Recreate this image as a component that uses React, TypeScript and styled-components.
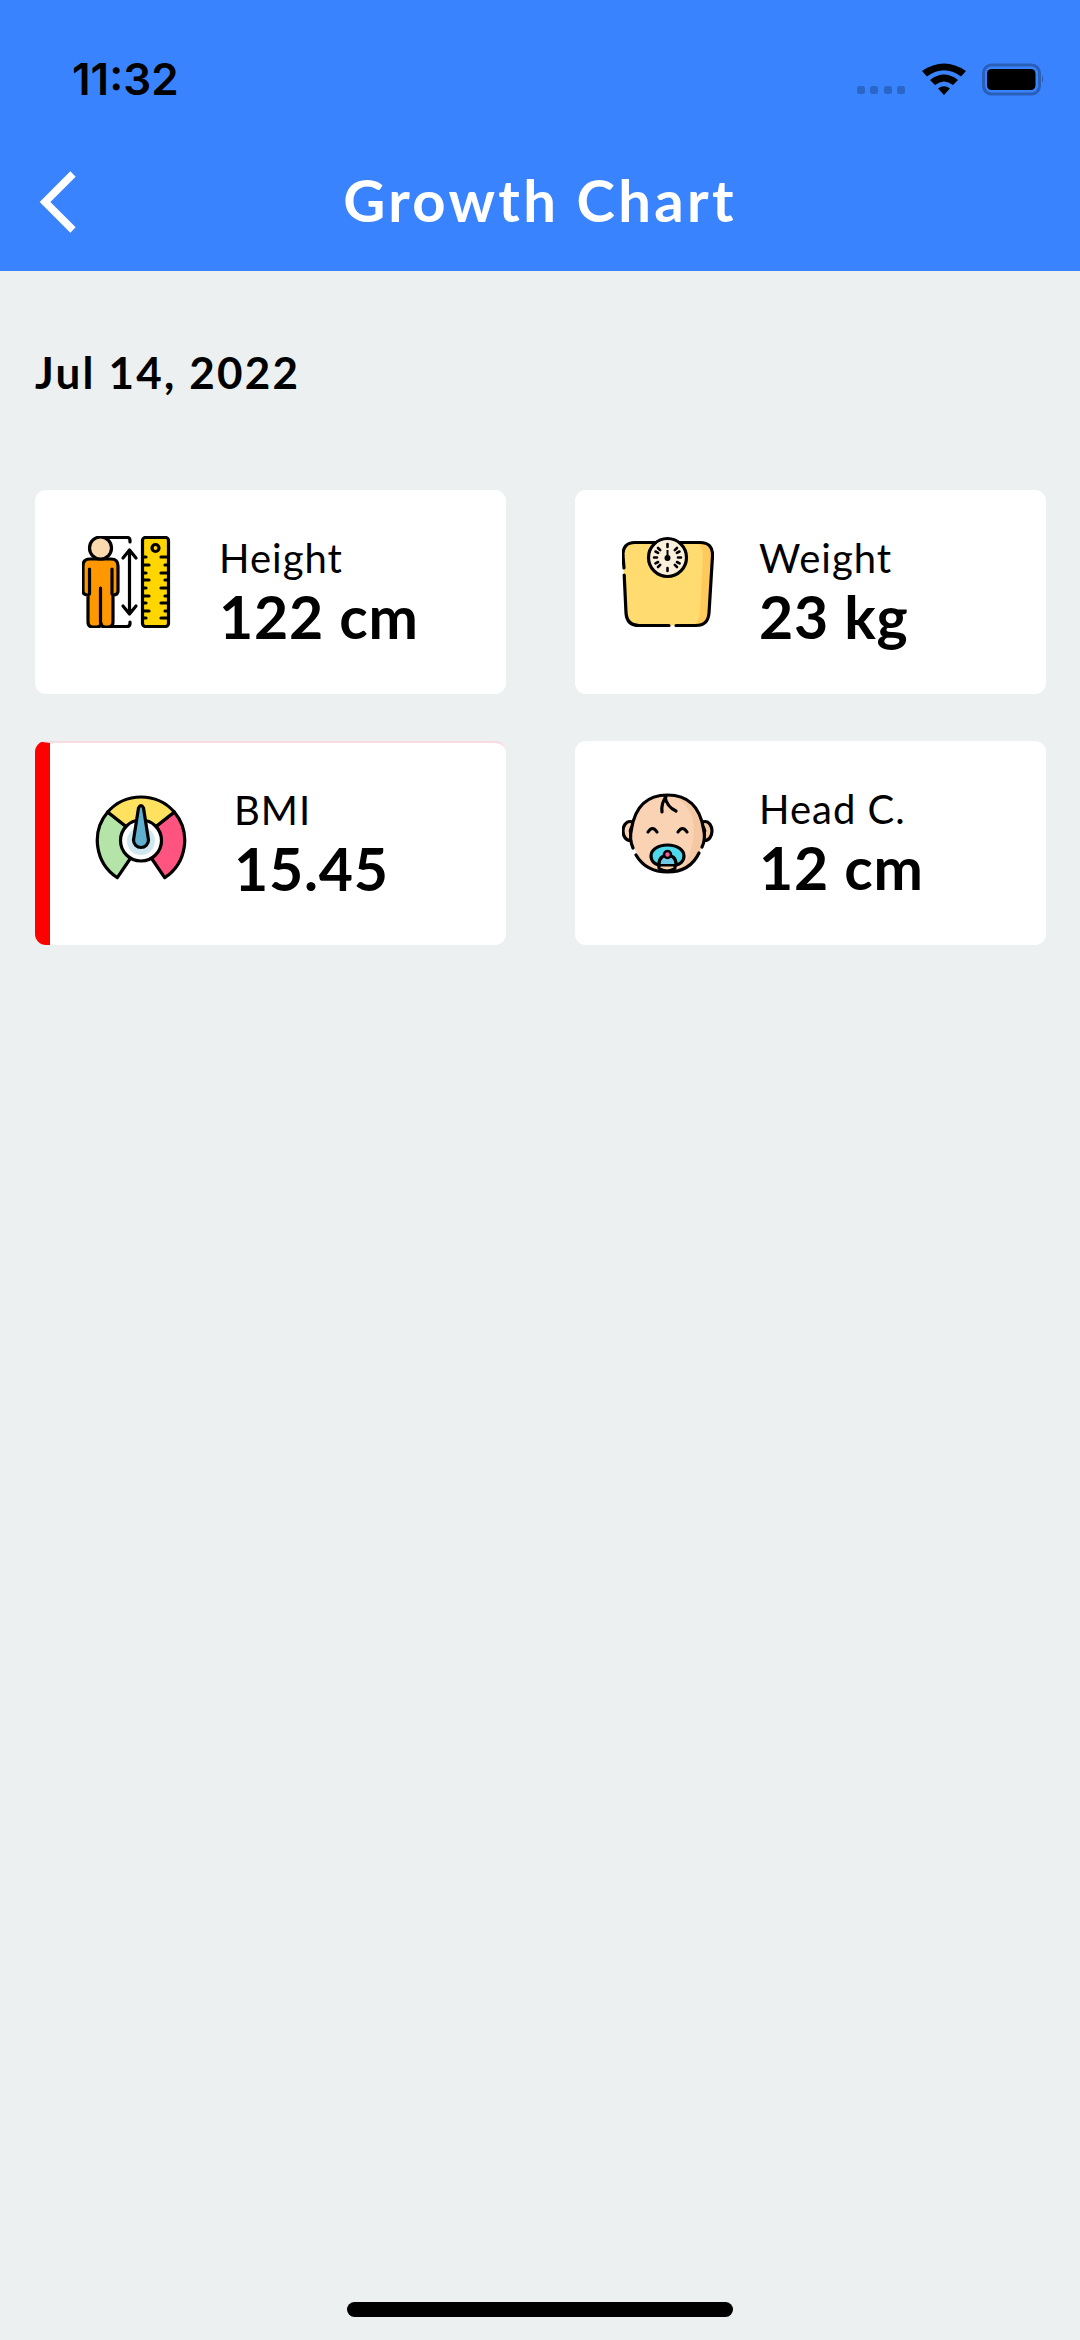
import React from "react";
import styled, { createGlobalStyle } from "styled-components";

const Global = createGlobalStyle`
  html, body { margin: 0; padding: 0; background: #ecf0f1; }
  * { box-sizing: border-box; }
`;

const Page = styled.div`
  width: 1080px;
  height: 2340px;
  display: flex;
  flex-direction: column;
  background: #ecf0f1;
  font-family: "Lato", "Liberation Sans", sans-serif;
  color: #000;
  overflow: hidden;
`;

const Header = styled.header`
  height: 271px;
  background: #3a83ff;
  display: flex;
  flex-direction: column;
`;

const StatusBar = styled.div`
  height: 158px;
  padding: 56px 36px 0 72px;
  display: flex;
  justify-content: space-between;
  align-items: flex-start;
`;

const Time = styled.div`
  font-family: "Inter", "Liberation Sans", sans-serif;
  font-size: 44px;
  line-height: 46px;
  font-weight: 600;
  letter-spacing: 0;
`;

const StatusIcons = styled.svg`
  display: block;
  margin-top: 7px;
`;

const NavBar = styled.nav`
  position: relative;
  height: 84px;
  display: flex;
  align-items: center;
  justify-content: center;
`;

const BackIcon = styled.svg`
  position: absolute;
  left: 38px;
  top: 13px;
`;

const Title = styled.h1`
  margin: 0;
  font-size: 58px;
  line-height: 84px;
  font-weight: 700;
  color: #fff;
  letter-spacing: 3.3px;
`;

const Content = styled.main`
  flex: 1;
  padding: 0 35px;
  display: flex;
  flex-direction: column;
`;

const DateLabel = styled.div`
  margin-top: 73px;
  font-size: 44px;
  line-height: 56px;
  font-weight: 700;
  letter-spacing: 2.2px;
`;

const Grid = styled.div`
  margin-top: 90px;
  display: grid;
  grid-template-columns: 471px 471px;
  column-gap: 69px;
  row-gap: 47px;
`;

const Card = styled.section<{ $alert?: boolean }>`
  height: 204px;
  background: #fff;
  border-radius: 11px;
  display: flex;
  align-items: flex-start;
  padding: ${(p) => (p.$alert ? "45px 0 0 45px" : "46px 0 0 47px")};
  border-top: ${(p) => (p.$alert ? "2px solid #f8dcdf" : "none")};
  border-left: ${(p) => (p.$alert ? "15px solid #ff0000" : "none")};
`;

const IconBox = styled.svg`
  display: block;
  flex: none;
  width: 92px;
  height: 92px;
`;

const CardText = styled.div<{ $alert?: boolean }>`
  margin-left: ${(p) => (p.$alert ? "47px" : "45px")};
  margin-top: -2px;
  display: flex;
  flex-direction: column;
`;

const Label = styled.div`
  font-size: 40px;
  line-height: 48px;
  font-weight: 400;
  letter-spacing: 1px;
`;

const Value = styled.div`
  font-size: 59px;
  line-height: 69px;
  font-weight: 700;
  letter-spacing: 0.8px;
`;

const HomeBar = styled.div`
  width: 386px;
  height: 15px;
  border-radius: 8px;
  background: #000;
  margin: 0 auto 23px;
`;

const S = { stroke: "#000", strokeWidth: 3.2, strokeLinecap: "round", strokeLinejoin: "round" } as const;

const HeightIcon = () => (
  <IconBox viewBox="0 0 92 92">
    <path d="M18 1.500H45q3 0 3 3V6M30 90.500H45q3 0 3-3V86" fill="none" {...S} />
    <path d="M47.500 14V78M41 22l6.500-8 6.500 8M41 70l6.500 8 6.500-8" fill="none" {...S} />
    <path d="M8 23h21q7 0 7 7v25q0 4-5 4v27q0 5-5 5h-3q-4 0-4-4q0 4-4 4h-4q-5 0-5-5V59q-5 0-5-4V30q0-7 7-7z" fill="#ff9800" {...S} />
    <path d="M7.500 33V58M30 33V58M18.500 52V86" fill="none" {...S} />
    <circle cx="18.500" cy="12" r="11" fill="#fbd9ae" {...S} />
    <rect x="60.500" y="1.500" width="26" height="89" rx="3" fill="#ffd600" {...S} />
    <circle cx="73.500" cy="12" r="3.500" fill="#ffd600" {...S} />
    <path d="M79 21h7M61 29h6M79 37h7M61 44h6M79 52h7M61 60h6M79 67h7M61 75h6M79 82h7M61 21h3M83 29h3M61 37h3M83 44h3M61 52h3M83 60h3M61 67h3M83 75h3M61 82h3" fill="none" {...S} />
  </IconBox>
);

const WeightIcon = () => (
  <IconBox viewBox="0 0 92 92">
    <path d="M13 6.500H78Q91 6.500 90.500 20L87 77Q86 89.500 74 89.500H17Q5 89.500 4 77L1 20Q0.500 6.500 13 6.500z" fill="#ffdb70" />
    <path d="M70 6.500H78Q91 6.500 90.500 20L87 77Q86 89.500 74 89.500H66Q77 89.500 78 77L81 20Q81 6.500 70 6.500z" fill="#ffc95c" />
    <path d="M2 32L1 20Q0.500 6.500 13 6.500H78Q91 6.500 90.500 20L87 77Q86 89.500 74 89.500H54M47 89.500H17Q5 89.500 4 77L2.200 39" fill="none" {...S} />
    <circle cx="45.500" cy="21.500" r="19" fill="#fbf0dc" {...S} />
    <path d="M45.500 8v3M45.500 32v3M32 21.500h3M56 21.500h3M36 12l2.200 2.200M52.800 28.800L55 31M55 12l-2.200 2.200M38.200 28.800L36 31M33.500 15.500l2.600 1.300M55 26l2.600 1.300M57.500 15.500l-2.600 1.300M36.100 26l-2.600 1.300" fill="none" stroke="#000" strokeWidth="2.600" strokeLinecap="round" />
    <circle cx="45.500" cy="22" r="3" fill="#000" />
    <path d="M45.500 14v8" stroke="#000" strokeWidth="2" />
  </IconBox>
);

const BmiIcon = () => (
  <IconBox viewBox="0 0 92 92">
    <path d="M12.700 24A44.500 44.500 0 0 0 22.300 89.700L35.700 70A21 21 0 0 1 31.700 39z" fill="#b5e4a8" {...S} />
    <path d="M79.300 24A44.500 44.500 0 0 1 69.700 89.700L56.300 70A21 21 0 0 0 60.300 39z" fill="#ff5480" {...S} />
    <path d="M12.700 24A44.500 44.500 0 0 1 79.300 24L60.300 39A21 21 0 0 0 31.700 39z" fill="#ffe160" {...S} />
    <circle cx="46" cy="52.500" r="20.500" fill="#fff" {...S} />
    <circle cx="46" cy="53" r="14" fill="#cfe8f0" />
    <path d="M43.500 20Q46 15 48.500 20L53.500 52A7.500 7.500 0 1 1 38.500 52z" fill="#5fb0d0" {...S} />
  </IconBox>
);

const HeadIcon = () => (
  <IconBox viewBox="0 0 92 92">
    <ellipse cx="8" cy="44" rx="7" ry="9.500" fill="#fad3b5" {...S} />
    <ellipse cx="83" cy="44" rx="7" ry="9.500" fill="#f5c8a4" {...S} />
    <path d="M11 50q-6-6 0-12M80 50q6-6 0-12" fill="none" stroke="#000" strokeWidth="2.500" strokeLinecap="round" />
    <ellipse cx="45.500" cy="46.500" rx="36" ry="38.500" fill="#fad3b5" />
    <path d="M52 9Q82 15 81.500 46.500Q81 72 60 82Q72 62 72 44Q72 20 52 9z" fill="#f5c8a4" />
    <path d="M11 61Q7 52 9.500 42Q15 8 45.500 8Q76 8 81.500 42Q84 52 80 60M14 68Q24 85 45.500 85Q68 85 77 66" fill="none" {...S} />
    <path d="M40 25q-1-9 4-15M43 10q2 10 11 14" fill="none" {...S} />
    <path d="M26 45q4.500-7 9 0M56 45q4.500-7 9 0" fill="none" {...S} />
    <path d="M37 76H53V81q-3 3-8 3t-8-3z" fill="#f7cfa8" {...S} />
    <path d="M45.500 58c10 0 16.500 5 16.500 11 0 5-4 9-9 9H38c-5 0-9-4-9-9 0-6 6.500-11 16.500-11z" fill="#4dd8ec" {...S} />
    <path d="M37 77C37 65 54 65 54 77" fill="#6fc9e0" {...S} />
    <circle cx="45.500" cy="67.500" r="3.500" fill="#f0609c" stroke="#000" strokeWidth="2.500" />
  </IconBox>
);

const cards = [
  { key: "h", label: "Height", value: "122 cm", icon: <HeightIcon /> },
  { key: "w", label: "Weight", value: "23 kg", icon: <WeightIcon /> },
  { key: "b", label: "BMI", value: "15.45", icon: <BmiIcon />, alert: true },
  { key: "c", label: "Head C.", value: "12 cm", icon: <HeadIcon /> },
];

export default function App() {
  return (
    <Page>
      <Global />
      <Header>
        <StatusBar>
          <Time>11:32</Time>
          <StatusIcons width="188" height="40" viewBox="0 0 188 40">
            <g fill="#2a66c8">
              <rect x="1" y="23" width="8" height="8" rx="2.500" />
              <rect x="14" y="23" width="8" height="8" rx="2.500" />
              <rect x="28" y="23" width="8" height="8" rx="2.500" />
              <rect x="41" y="23" width="8" height="8" rx="2.500" />
            </g>
            <path d="M66 8Q88-7 110 8L105 13.500Q88 1 71 13.500z" />
            <path d="M74 17Q88 6 102 17L97 22Q88 15 79 22z" />
            <path d="M82 25.500Q88 21 94 25.500L88 32z" />
            <rect x="127.500" y="2" width="56" height="29" rx="8" fill="none" stroke="#2a5fb8" strokeWidth="3" />
            <rect x="131" y="6" width="48.500" height="21" rx="4.500" />
            <path d="M186 12q2.500 4 0 8z" fill="#2a5fb8" />
          </StatusIcons>
        </StatusBar>
        <NavBar>
          <BackIcon width="40" height="62" viewBox="0 0 40 62">
            <path d="M35 3L7 31L35 59" fill="none" stroke="#fff" strokeWidth="7.500" />
          </BackIcon>
          <Title>Growth Chart</Title>
        </NavBar>
      </Header>
      <Content>
        <DateLabel>Jul 14, 2022</DateLabel>
        <Grid>
          {cards.map((c) => (
            <Card key={c.key} $alert={c.alert}>
              {c.icon}
              <CardText $alert={c.alert}>
                <Label>{c.label}</Label>
                <Value>{c.value}</Value>
              </CardText>
            </Card>
          ))}
        </Grid>
      </Content>
      <HomeBar />
    </Page>
  );
}
